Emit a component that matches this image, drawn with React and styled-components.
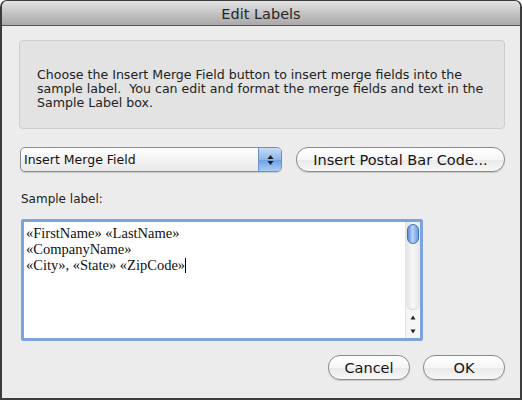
import React from 'react'
import styled, {createGlobalStyle} from 'styled-components'

const GlobalStyle = createGlobalStyle`
  html, body {
    margin: 0;
    padding: 0;
    background: #ffffff;
  }
  body {
    font-family: "DejaVu Sans", "Liberation Sans", sans-serif;
  }
`

const App = () => {
    return (
        <>
        <GlobalStyle/>
        <Window>
            <TitleBar>Edit Labels</TitleBar>
            <Body>
                <InfoBox>
                    Choose the Insert Merge Field button to insert merge fields into the<br/>
                    sample label.&nbsp; You can edit and format the merge fields and text in the<br/>
                    Sample Label box.
                </InfoBox>

                <ControlRow>
                    <Select>
                        <SelectLabel>Insert Merge Field</SelectLabel>
                        <SelectArrows>
                            <svg width="7" height="12" viewBox="0 0 7 12">
                                <path d="M3.5 1 L6.5 5 L0.5 5 Z" fill="#1a1a1a"/>
                                <path d="M3.5 11 L6.5 7 L0.5 7 Z" fill="#1a1a1a"/>
                            </svg>
                        </SelectArrows>
                    </Select>
                    <PillButton width="209px">Insert Postal Bar Code...</PillButton>
                </ControlRow>

                <FieldLabel>Sample label:</FieldLabel>

                <TextBox>
                    <TextLines>
                        <div>«FirstName» «LastName»</div>
                        <div>«CompanyName»</div>
                        <div>«City», «State» «ZipCode»<Caret/></div>
                    </TextLines>
                    <ScrollBar>
                        <Track>
                            <Thumb/>
                        </Track>
                        <ScrollArrow>
                            <svg width="6" height="5" viewBox="0 0 6 5"><path d="M3 0.5 L5.5 4.5 L0.5 4.5 Z" fill="#222"/></svg>
                        </ScrollArrow>
                        <ScrollArrow>
                            <svg width="6" height="5" viewBox="0 0 6 5"><path d="M3 4.5 L5.5 0.5 L0.5 0.5 Z" fill="#222"/></svg>
                        </ScrollArrow>
                    </ScrollBar>
                </TextBox>

                <ButtonRow>
                    <PillButton width="82px">Cancel</PillButton>
                    <PillButton width="82px">OK</PillButton>
                </ButtonRow>
            </Body>
        </Window>
        </>
    )
}

const Window = styled.div`
  width: 522px;
  height: 400px;
  box-sizing: border-box;
  border: 2px solid #3c3c3c;
  border-top-width: 1px;
  border-radius: 7px 7px 0 0;
  background: #ececec;
  overflow: hidden;
  display: flex;
  flex-direction: column;
`

const TitleBar = styled.div`
  height: 25px;
  flex-shrink: 0;
  background: linear-gradient(#e4e4e4, #c4c4c4 50%, #a9a9a9);
  border-bottom: 1px solid #555;
  display: flex;
  align-items: center;
  justify-content: center;
  font-size: 14.5px;
  color: #262626;
  padding-top: 1px;
  box-sizing: border-box;
`

const Body = styled.div`
  padding: 14px 15px 0 17px;
  display: flex;
  flex-direction: column;
`

const InfoBox = styled.div`
  height: 89px;
  box-sizing: border-box;
  background: #e3e3e3;
  border: 1px solid #cdcdcd;
  border-radius: 4px;
  padding: 27px 10px 0 17px;
  font-size: 12.6px;
  line-height: 14px;
  color: #222;
  white-space: nowrap;
`

const ControlRow = styled.div`
  display: flex;
  align-items: center;
  gap: 14px;
  margin-top: 18px;
  padding-left: 1px;
`

const Select = styled.div`
  width: 262px;
  height: 25px;
  box-sizing: border-box;
  border: 1px solid #8d8d8d;
  border-radius: 5px;
  background: linear-gradient(#ffffff, #f3f3f3 50%, #e8e8e8);
  box-shadow: 0 1px 1px rgba(0,0,0,0.15);
  display: flex;
  overflow: hidden;
`

const SelectLabel = styled.div`
  flex: 1;
  display: flex;
  align-items: center;
  padding-left: 3px;
  font-size: 12.5px;
  color: #111;
`

const SelectArrows = styled.div`
  width: 22px;
  display: flex;
  align-items: center;
  justify-content: center;
  border-left: 1px solid #6c8fc4;
  background: linear-gradient(#c6dcf6, #8fb5ea 50%, #6b9ee3 51%, #a9cbf5);
`

const PillButton = styled.div`
  width: ${props => props.width};
  height: 25px;
  box-sizing: border-box;
  border: 1px solid #8a8a8a;
  border-radius: 12px;
  background: linear-gradient(#ffffff, #f6f6f6 50%, #e9e9e9 51%, #f7f7f7);
  box-shadow: 0 1px 1px rgba(0,0,0,0.15);
  display: flex;
  align-items: center;
  justify-content: center;
  font-size: 14.5px;
  color: #151515;
`

const FieldLabel = styled.div`
  margin-top: 20px;
  padding-left: 2px;
  font-size: 12px;
  color: #222;
`

const TextBox = styled.div`
  margin-top: 13px;
  margin-left: 2px;
  width: 402px;
  height: 122px;
  box-sizing: border-box;
  border: 3px solid #7ba3dc;
  border-radius: 2px;
  background: #ffffff;
  display: flex;
`

const TextLines = styled.div`
  flex: 1;
  padding: 3px 0 0 2px;
  font-family: "Liberation Serif", serif;
  font-size: 14.5px;
  line-height: 16px;
  color: #111;
`

const Caret = styled.span`
  display: inline-block;
  width: 1px;
  height: 15px;
  background: #000;
  vertical-align: -3px;
`

const ScrollBar = styled.div`
  width: 14px;
  display: flex;
  flex-direction: column;
  background: #f5f5f5;
  border-left: 1px solid #e3e3e3;
`

const Track = styled.div`
  flex: 1;
  padding: 2px 1px 0;
  border-bottom: 1px solid #d6d6d6;
  border-radius: 0 0 7px 7px;
  background: linear-gradient(90deg, #e4e4e4, #f8f8f8 50%, #e6e6e6);
`

const Thumb = styled.div`
  height: 18px;
  border-radius: 6px;
  border: 1px solid #3f6fb6;
  background: linear-gradient(90deg, #5c8fdb, #b8d3f7 45%, #6d9de3);
`

const ScrollArrow = styled.div`
  height: 14px;
  display: flex;
  align-items: center;
  justify-content: center;
  background: #f5f5f5;
`

const ButtonRow = styled.div`
  display: flex;
  justify-content: flex-end;
  gap: 13px;
  margin-top: 14px;
`

export default App
